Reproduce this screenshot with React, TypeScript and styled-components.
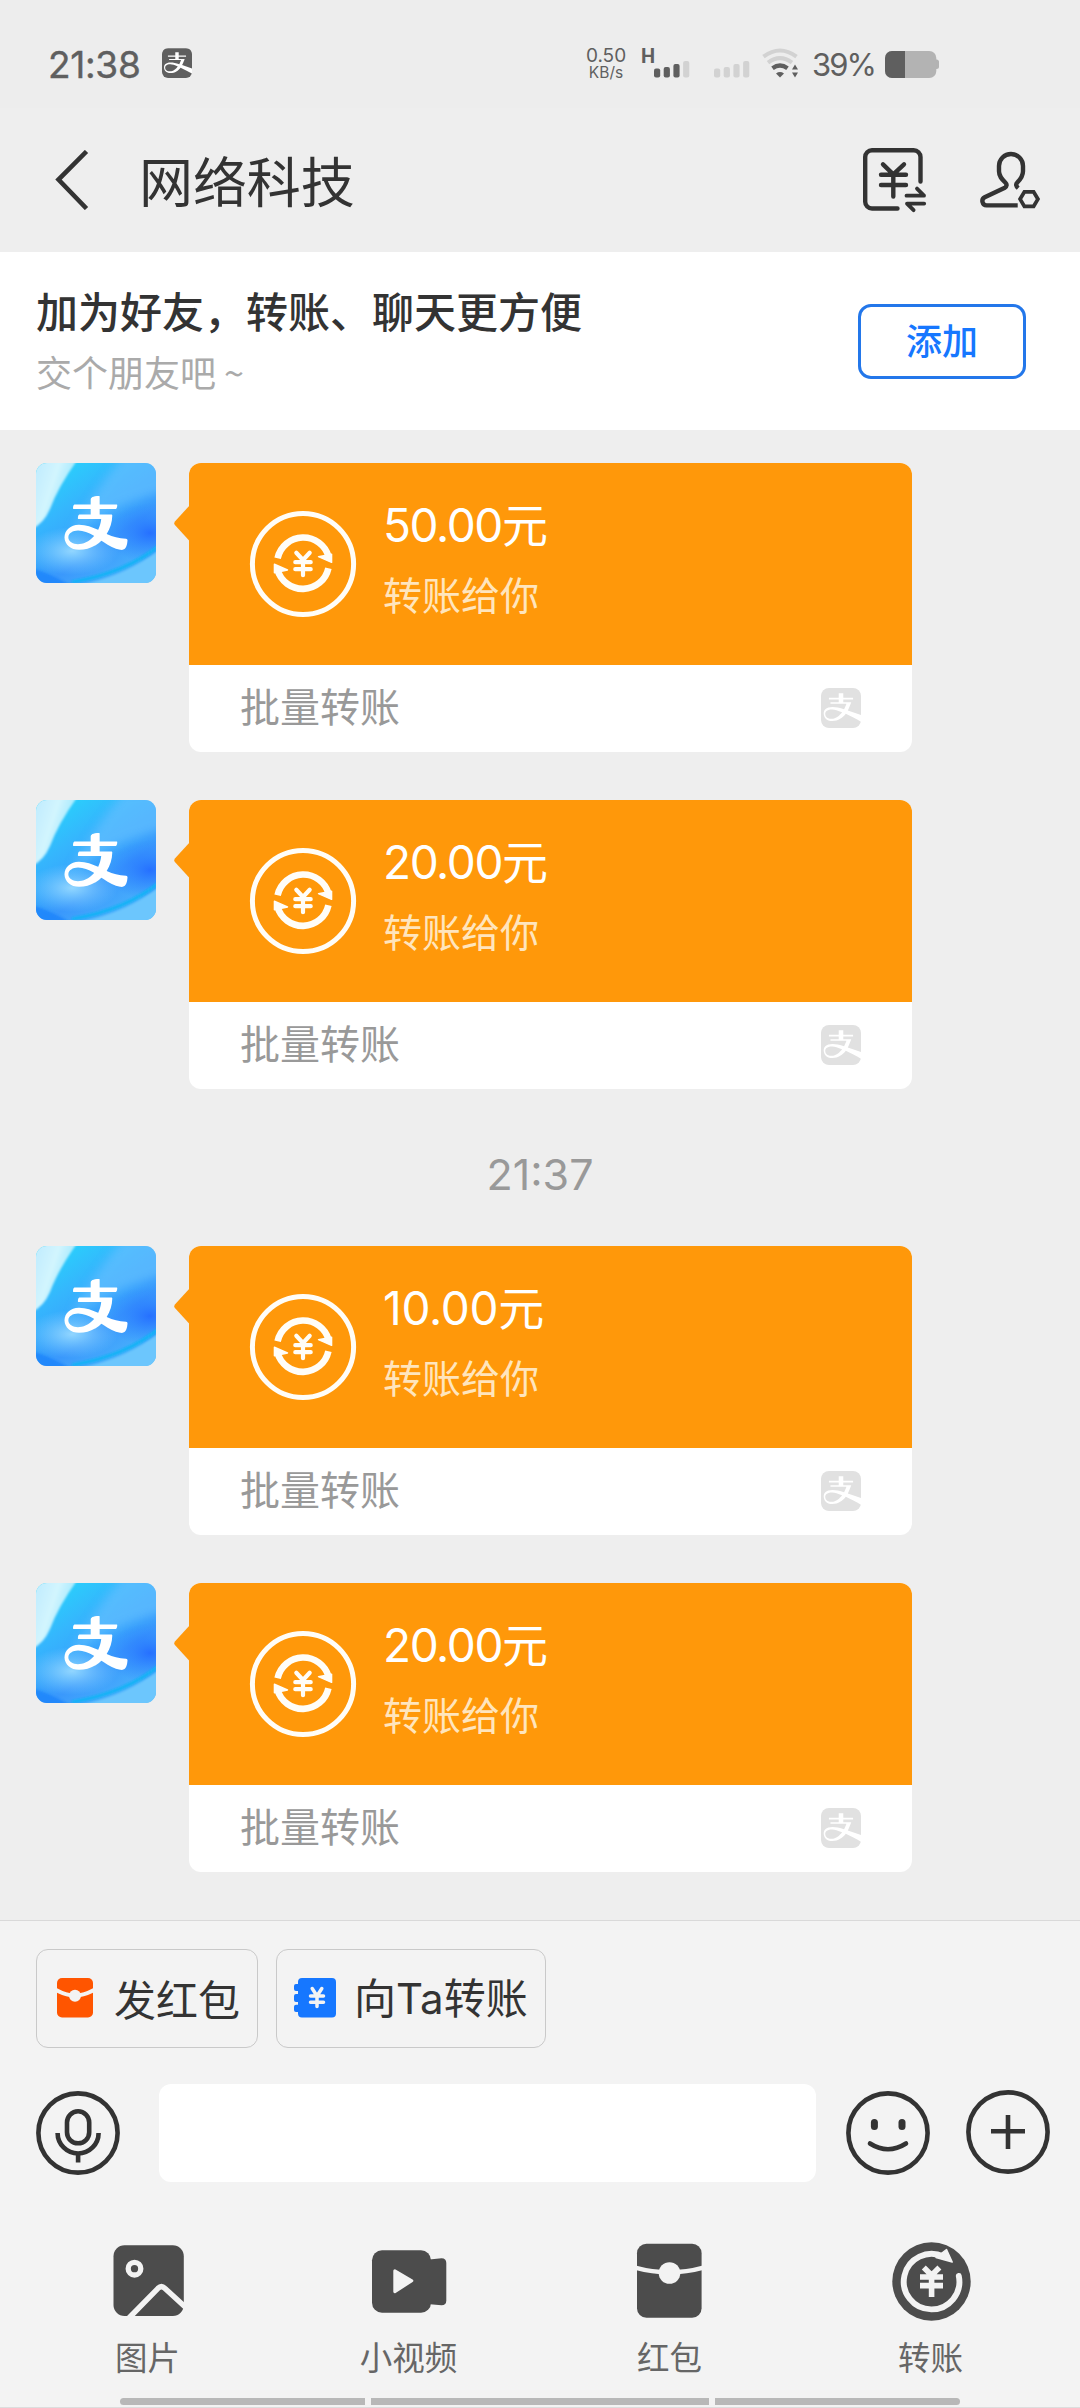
import React from "react";
import styled, { createGlobalStyle } from "styled-components";
import { FaAlipay } from "react-icons/fa";
import { AiOutlineAlipay } from "react-icons/ai";

const cjk = `"Noto Sans CJK SC", "Noto Sans", sans-serif`;
const latin = `Inter, "Noto Sans CJK SC", sans-serif`;

const GlobalStyle = createGlobalStyle`
  * { box-sizing: border-box; }
  body { margin: 0; background: #eeeeee; font-family: ${cjk}; }
  svg { display: block; flex: none; }
`;

const Screen = styled.main`
  display: flex;
  flex-direction: column;
  width: 1080px;
  height: 2408px;
  overflow: hidden;
  background: #eeeeee;
  color: #333333;
`;

/* ---------- status bar ---------- */

const StatusBar = styled.div`
  display: flex;
  align-items: center;
  height: 108px;
  padding: 18px 141px 0 48px;
  background: #ededed;
  color: #5f5f5f;
  font-family: ${latin};
`;

const Clock = styled.span`
  width: 114px;
  font-size: 37px;
  font-weight: 400;
  line-height: 44px;
  letter-spacing: -0.3px;
  padding-top: 4px;
  -webkit-text-stroke: 0.4px #5f5f5f;
`;

const Logo = styled.span<{ $size: number; $radius: number; $bg: string; $color: string }>`
  display: flex;
  align-items: center;
  justify-content: center;
  overflow: hidden;
  flex: none;
  width: ${(p) => p.$size}px;
  height: ${(p) => p.$size}px;
  border-radius: ${(p) => p.$radius}px;
  background: ${(p) => p.$bg};
  color: ${(p) => p.$color};
  svg {
    width: ${(p) => p.$size * 1.004}px;
    height: ${(p) => p.$size * 1.147}px;
  }
`;

const StatusRight = styled.div`
  display: flex;
  align-items: center;
  margin-left: auto;
`;

const Speed = styled.div`
  display: flex;
  flex-direction: column;
  align-items: center;
  width: 38px;
  margin-right: 16px;
  padding-top: 3px;
  font-size: 19px;
  font-weight: 400;
  line-height: 17px;
  white-space: nowrap;
  small {
    font-size: 15.500px;
    line-height: 18px;
  }
`;

const NetType = styled.span`
  align-self: flex-start;
  width: 13px;
  padding-top: 4px;
  font-family: Roboto, sans-serif;
  font-size: 20px;
  font-weight: 700;
  line-height: 17px;
`;

const Percent = styled.span`
  width: 63px;
  margin: 3px 10px 0 14px;
  font-size: 31px;
  line-height: 36px;
  letter-spacing: -1.9px;
  white-space: nowrap;
`;

const BarsIcon = styled.svg`
  margin-right: 24px;
  & + & {
    margin-right: 12px;
  }
`;

const SignalBars = ({ filled }: { filled: number }) => (
  <BarsIcon width="36" height="30" viewBox="0 0 36 30">
    {[9, 10.5, 13.5, 16.5].map((h, i) => (
      <rect
        key={h}
        x={i * 9.7}
        y={29.5 - h}
        width="6.2"
        height={h}
        rx="2"
        fill={i < filled ? "#5f5f5f" : "#d2d2d2"}
      />
    ))}
  </BarsIcon>
);

const WifiIcon = () => (
  <svg width="36" height="30" viewBox="0 0 36 30" fill="none" strokeWidth="4">
    <path d="M1.5 8.6Q18 -3.6 34.5 8.6" stroke="#d2d2d2" />
    <path d="M6 14.6Q18 5.6 30 14.6" stroke="#d2d2d2" />
    <path d="M10.5 20.2Q18 15 25.5 20.2" stroke="#5f5f5f" strokeWidth="4.4" />
    <path d="M14 25.4Q18 22.6 22 25.4L18 29.4Z" fill="#5f5f5f" />
    <path d="M33 16.4l3 5h-6zM33 29.4l3-5h-6z" fill="#5f5f5f" />
  </svg>
);

const Battery = styled.svg`
  margin-top: 3px;
`;

const BatteryIcon = () => (
  <Battery width="54" height="28" viewBox="0 0 54 28">
    <path d="M50 8.5h1.5a2.5 2.5 0 0 1 2.5 2.5v4.500a2.500 2.500 0 0 1-2.500 2.500H50z" fill="#b3b3b3" />
    <rect width="51.300" height="27" rx="7" fill="#b3b3b3" />
    <path d="M7 0H20v27H7a7 7 0 0 1-7-7V7a7 7 0 0 1 7-7z" fill="#5f5f5f" />
  </Battery>
);

/* ---------- title bar ---------- */

const TitleBar = styled.header`
  display: flex;
  align-items: center;
  height: 144px;
  padding: 0 36px 0 54px;
`;

const Title = styled.h1`
  flex: 1;
  margin: 0 0 0 49px;
  font-size: 54px;
  font-weight: 400;
  line-height: 78px;
  letter-spacing: -0.1px;
`;

const TitleActions = styled.div`
  display: flex;
  gap: 48px;
`;

const BackIcon = () => (
  <svg width="36" height="60" viewBox="0 0 36 60" fill="none" stroke="#333" strokeWidth="4.600">
    <path d="M32.500 1.500L4.500 29.600L32.500 58.500" />
  </svg>
);

const TransferRecordIcon = () => (
  <svg
    width="70"
    height="68"
    viewBox="0 0 70 68"
    fill="none"
    stroke="#333"
    strokeWidth="4.400"
    strokeLinecap="round"
    strokeLinejoin="round"
  >
    <path d="M37.500 62.500H12a6.800 6.800 0 0 1-6.800-6.800V11A6.800 6.800 0 0 1 12 4.200h41.700A6.800 6.800 0 0 1 60.500 11v24.500" />
    <path d="M23 18.300l10.300 10 10.700-10M21 28.700h25M21 39h25M33.300 29v21.500" />
    <path d="M46.500 49.700H64L57 42.600M64.200 57.600H47L53.600 64.200" strokeWidth="3.800" />
  </svg>
);

const ContactSettingsIcon = () => (
  <svg width="66" height="68" viewBox="0 0 66 68" fill="none" stroke="#333" strokeWidth="4.400">
    <path d="M39.700 59.400H8.600a4.300 4.300 0 0 1-1.900-8.100L26.800 41.700c2.200-1.200 2.300-3.400.700-5C23.700 33 21 30.200 21 25.200v-5.200a12 12 0 0 1 24 0v5.200c0 5-2.500 8-5.700 11.300-1.700 1.700-1.500 3.500.9 5.600" />
    <path d="M46.400 45.800h9.200l4.300 7.300-4.300 7.300h-9.200l-4.300-7.300z" strokeWidth="3.800" />
  </svg>
);

/* ---------- add friend banner ---------- */

const Banner = styled.section`
  display: flex;
  align-items: center;
  justify-content: space-between;
  height: 178px;
  padding: 0 54px 0 36px;
  background: #ffffff;
`;

const BannerText = styled.div`
  display: flex;
  flex-direction: column;
`;

const BannerTitle = styled.strong`
  margin: -3px 0 3px;
  font-size: 42px;
  font-weight: 500;
  line-height: 60px;
`;

const BannerHint = styled.span`
  font-size: 36px;
  line-height: 56px;
  color: #aaaaaa;
`;

const AddButton = styled.button`
  width: 168px;
  height: 75px;
  padding: 0 0 4px;
  border: 3px solid #2377ea;
  border-radius: 13px;
  background: #ffffff;
  color: #1677ff;
  font: 500 36px/60px ${cjk};
`;

/* ---------- chat ---------- */

const Chat = styled.section`
  display: flex;
  flex-direction: column;
  flex: 1;
  padding: 33px 36px 0;
`;

const Message = styled.article`
  display: flex;
  align-items: flex-start;
  height: 289px;
  margin-bottom: 48px;
`;

const Avatar = styled.div`
  display: grid;
  flex: none;
  width: 120px;
  height: 120px;
  margin-right: 18px;
  border-radius: 11px;
  overflow: hidden;
  > svg {
    grid-area: 1 / 1;
  }
`;

const AvatarMark = styled(AiOutlineAlipay)`
  width: 72px;
  height: 72px;
  place-self: center;
  color: #ffffff;
`;

const Tail = styled.svg`
  margin: 42px -1px 0 0;
`;

const Card = styled.div`
  width: 723px;
  height: 289px;
  border-radius: 12px;
  overflow: hidden;
  background: #ffffff;
`;

const CardTop = styled.div`
  display: flex;
  align-items: flex-start;
  height: 202px;
  padding: 45px 0 0 58px;
  background: #ff980a;
`;

const CardInfo = styled.div`
  display: flex;
  flex-direction: column;
  margin: -13px 0 0 24px;
`;

const Amount = styled.span<{ $tracking: number }>`
  font-family: ${latin};
  font-size: 46px;
  line-height: 60px;
  letter-spacing: ${(p) => p.$tracking}px;
  color: #ffffff;
`;

const Caption = styled.span`
  margin-top: 10px;
  font-size: 39px;
  line-height: 56px;
  color: #ffe5bd;
`;

const CardBottom = styled.div`
  display: flex;
  align-items: center;
  justify-content: space-between;
  height: 87px;
  padding: 0 51px 0 51px;
  font-size: 40px;
  line-height: 56px;
  color: #999999;
`;

const CardLabel = styled.span`
  margin-top: -7px;
`;

const CardBadge = styled(Logo)`
  margin-top: -1px;
`;

const TimeStamp = styled.time`
  height: 109px;
  padding-top: 10px;
  text-align: center;
  font-family: ${latin};
  font-size: 43px;
  line-height: 54px;
  color: #999999;
`;

const AvatarArt = ({ id }: { id: string }) => (
  <svg width="120" height="120" viewBox="0 0 120 120">
    <defs>
      <linearGradient id={`${id}-base`} x1="0.150" y1="0" x2="0.850" y2="1">
        <stop offset="0" stopColor="#27d5fb" />
        <stop offset="0.300" stopColor="#35b6fd" />
        <stop offset="0.650" stopColor="#3a98fc" />
        <stop offset="1" stopColor="#4fb9fb" />
      </linearGradient>
      <linearGradient id={`${id}-pale`} x1="0" y1="0" x2="1" y2="0.500">
        <stop offset="0" stopColor="#bceafe" />
        <stop offset="0.500" stopColor="#d2f5fe" />
        <stop offset="1" stopColor="#8be3fd" />
      </linearGradient>
      <radialGradient id={`${id}-deep`}>
        <stop offset="0" stopColor="#2670ff" />
        <stop offset="1" stopColor="#2c84ff" stopOpacity="0" />
      </radialGradient>
      <radialGradient id={`${id}-soft`}>
        <stop offset="0" stopColor="#92d6ff" />
        <stop offset="1" stopColor="#7accff" stopOpacity="0" />
      </radialGradient>
      <filter id={`${id}-haze`} x="-20%" y="-20%" width="140%" height="140%">
        <feGaussianBlur stdDeviation="5" />
      </filter>
      <filter id={`${id}-edge`} x="-20%" y="-20%" width="140%" height="140%">
        <feGaussianBlur stdDeviation="1.200" />
      </filter>
    </defs>
    <rect width="120" height="120" fill={`url(#${id}-base)`} />
    <path
      d="M88 -8H132V28Q80 40 34 72Q56 30 88 -8Z"
      fill="#6cc2ff"
      opacity="0.600"
      filter={`url(#${id}-haze)`}
    />
    <path
      d="M-4 -4H42Q22 24 14 46Q8 60 -4 66Z"
      fill={`url(#${id}-pale)`}
      filter={`url(#${id}-edge)`}
    />
    <ellipse cx="114" cy="70" rx="44" ry="30" fill={`url(#${id}-deep)`} />
    <ellipse cx="36" cy="88" rx="46" ry="24" fill={`url(#${id}-soft)`} />
    <path
      d="M-10 104Q14 108 46 130H-10Z"
      fill="#1f84fb"
      opacity="0.800"
      filter={`url(#${id}-edge)`}
    />
    <path d="M44 122Q92 112 124 86V124Z" fill="#6cc6fd" filter={`url(#${id}-edge)`} />
    <path
      d="M36 119Q90 110 124 82"
      fill="none"
      stroke="#12b4f5"
      strokeWidth="3"
      filter={`url(#${id}-edge)`}
    />
  </svg>
);

const TransferIcon = () => (
  <svg
    width="112"
    height="112"
    viewBox="-56 -56 112 112"
    fill="none"
    stroke="#fffdf8"
    strokeLinejoin="round"
  >
    <circle r="50.600" strokeWidth="5" />
    <g transform="translate(0 -0.800)">
      <path d="M-25.400 -5A26.300 26.300 0 0 1 25.600 -6.500" strokeWidth="6.600" />
      <path d="M25.400 5A26.300 26.300 0 0 1 -25.600 6.500" strokeWidth="6.600" />
      <path d="M15.500 -6.500L28.600 -9V-0.800Z" fill="#fffdf8" strokeWidth="1.400" />
      <path d="M-15.500 6.800L-28.600 9.500V1Z" fill="#fffdf8" strokeWidth="1.400" />
      <path
        d="M-6.700 -10.400L0 -3.200L6.700 -10.400M-7.700 -1H7.700M-7.700 6H7.700M0 -3V12"
        strokeWidth="4.200"
        strokeLinecap="round"
      />
    </g>
  </svg>
);

const TransferMessage = ({ id, amount }: { id: string; amount: string }) => (
  <Message>
    <Avatar>
      <AvatarArt id={id} />
      <AvatarMark />
    </Avatar>
    <Tail width="16" height="37" viewBox="0 0 16 37">
      <path d="M16 0L0.900 16.500Q-0.300 18.300 0.900 20.100L16 36.500Z" fill="#ff980a" />
    </Tail>
    <Card>
      <CardTop>
        <TransferIcon />
        <CardInfo>
          {/* the digit 1 is narrow, so amounts that open with it need less tightening */}
          <Amount $tracking={amount.startsWith("1") ? -0.3 : -1.4}>{amount}元</Amount>
          <Caption>转账给你</Caption>
        </CardInfo>
      </CardTop>
      <CardBottom>
        <CardLabel>批量转账</CardLabel>
        <CardBadge $size={40} $radius={8} $bg="#ffffff" $color="#e1e1e1">
          <FaAlipay />
        </CardBadge>
      </CardBottom>
    </Card>
  </Message>
);

/* ---------- composer ---------- */

const Composer = styled.footer`
  display: flex;
  flex-direction: column;
  height: 488px;
  padding-top: 28px;
  border-top: 1px solid #d9d9d9;
  background: #f3f3f3;
`;

const Chips = styled.div`
  display: flex;
  gap: 18px;
  padding: 0 36px;
`;

const Chip = styled.button<{ $gap: number; $left: number }>`
  display: flex;
  align-items: center;
  gap: ${(p) => p.$gap}px;
  height: 99px;
  padding: 0 17px 2px ${(p) => p.$left}px;
  border: 1px solid #c9c9c9;
  border-radius: 12px;
  background: transparent;
  color: #333333;
  font: 400 42px/60px ${cjk};
  white-space: nowrap;
`;

const ChipLatin = styled.span`
  font-family: Inter, sans-serif;
`;

const InputRow = styled.div`
  display: flex;
  align-items: center;
  margin-top: 36px;
  padding: 0 30px 0 36px;
`;

const Input = styled.input`
  flex: 1;
  min-width: 0;
  height: 98px;
  margin: 0 30px 0 39px;
  padding: 0 24px;
  border: 0;
  border-radius: 12px;
  background: #ffffff;
  font: 400 42px ${cjk};
`;

const RoundButton = styled.button`
  display: flex;
  width: 84px;
  height: 84px;
  padding: 0;
  border: 0;
  background: none;
  & + & {
    margin: -2px 0 0 36px;
  }
`;

const Tools = styled.nav`
  display: flex;
  justify-content: center;
  gap: 177px;
  margin-top: 57px;
  padding-right: 2px;
`;

const Tool = styled.div`
  display: flex;
  flex-direction: column;
  align-items: center;
  width: 84px;
  font-size: 32.500px;
  line-height: 44px;
  color: #666666;
  white-space: nowrap;
`;

const ToolLabel = styled.span`
  margin-top: 11px;
`;

const HomeIndicator = styled.div`
  display: flex;
  gap: 6px;
  margin-top: auto;
  padding: 0 120px 2px;
  border-bottom: 1px solid #dddddd;
  span {
    height: 7px;
    background: #b8b8b8;
  }
  span:nth-child(1) {
    width: 245px;
    border-radius: 4px 0 0 4px;
  }
  span:nth-child(2) {
    flex: 1;
  }
  span:nth-child(3) {
    width: 245px;
    border-radius: 0 4px 4px 0;
  }
`;

const RedPacketIcon = () => (
  <svg width="36" height="40" viewBox="0 0 36 40">
    <rect width="36" height="39.500" rx="5" fill="#ff5500" />
    <path d="M-1 12Q9 17.500 18 17.500T37 12" fill="none" stroke="#f3f3f3" strokeWidth="4" />
    <circle cx="18" cy="17.700" r="6" fill="#f3f3f3" />
  </svg>
);

const TransferBookIcon = () => (
  <svg width="42" height="40" viewBox="0 0 42 40">
    <path
      d="M8 0H38a4 4 0 0 1 4 4V35.500a4 4 0 0 1-4 4H8a4 4 0 0 1-4-4V34H2a2 2 0 0 1-2-2V28.800a2 2 0 0 1 2-2H4V24H2a2 2 0 0 1-2-2V18a2 2 0 0 1 2-2H4V13H2a2 2 0 0 1-2-2V8a2 2 0 0 1 2-2H4V4A4 4 0 0 1 8 0Z"
      fill="#1677ff"
    />
    <path
      d="M18.200 10.500L23 18L27.800 10.500M16.500 18H29.500M16.500 24.300H29.500M23 18V28.500"
      fill="none"
      stroke="#f3f3f3"
      strokeWidth="3.500"
      strokeLinecap="round"
    />
  </svg>
);

const outline = {
  width: 84,
  height: 84,
  viewBox: "0 0 84 84",
  fill: "none",
  stroke: "#333333",
  strokeWidth: 4.6,
} as const;

const MicIcon = () => (
  <svg {...outline}>
    <circle cx="42" cy="42" r="39.600" />
    <rect x="31" y="20.300" width="22.200" height="32" rx="11.100" />
    <path d="M21.600 42a20.500 20.500 0 0 0 41 0M42.100 62.500V71.500" />
  </svg>
);

const SmileIcon = () => (
  <svg {...outline}>
    <circle cx="42" cy="42" r="39.600" />
    <path d="M24 52.500Q42 64 60 52.500" strokeLinecap="round" />
    <rect x="24.900" y="28" width="7" height="11" rx="3.500" fill="#333" stroke="none" />
    <rect x="52.500" y="28" width="7" height="11" rx="3.500" fill="#333" stroke="none" />
  </svg>
);

const PlusIcon = () => (
  <svg {...outline}>
    <circle cx="42" cy="42" r="39.600" />
    <path d="M25 41.300H59M42 25V59" />
  </svg>
);

const PictureIcon = () => (
  <svg width="84" height="84" viewBox="0 0 84 84" fill="none" stroke="#f3f3f3">
    <rect x="7.500" y="6.300" width="70.300" height="70.700" rx="11" fill="#4c4c4c" stroke="none" />
    <circle cx="28.500" cy="29.700" r="6.300" strokeWidth="5.300" />
    <path d="M20.500 81.500L52 49.300Q55.400 46 58.800 49.300L82 70.500" strokeWidth="5.400" />
  </svg>
);

const VideoIcon = () => (
  <svg width="84" height="84" viewBox="0 0 84 84" fill="#4c4c4c">
    <rect x="5" y="11.300" width="59" height="62.400" rx="10" />
    <path d="M60 20.800L74.500 19.200Q79.300 19.200 79.300 24V61.500Q79.300 66.300 74.500 66.300L60 65Z" />
    <path
      d="M27.800 31.700L44.800 41.800L27.800 52.700Z"
      fill="#f3f3f3"
      stroke="#f3f3f3"
      strokeWidth="3"
      strokeLinejoin="round"
    />
  </svg>
);

const EnvelopeIcon = () => (
  <svg width="84" height="84" viewBox="0 0 84 84">
    <rect x="9" y="4.700" width="64.600" height="74" rx="9.500" fill="#4c4c4c" />
    <path d="M7 28.600Q41.300 38 75.500 28.600" fill="none" stroke="#f3f3f3" strokeWidth="4.600" />
    <circle cx="41.500" cy="34" r="10.800" fill="#f3f3f3" />
  </svg>
);

const TransferToolIcon = () => (
  <svg width="84" height="84" viewBox="0 0 84 84" fill="none" stroke="#f3f3f3">
    <circle cx="42.500" cy="42.500" r="39.200" fill="#4c4c4c" stroke="none" />
    <path
      d="M69.800 37A27.800 27.800 0 1 1 54.500 17.500"
      strokeWidth="5.900"
      strokeLinecap="round"
    />
    <path d="M57.500 10.500L63.200 23L47 18.500Z" fill="#f3f3f3" strokeWidth="1.500" strokeLinejoin="round" />
    <path
      d="M34.800 28.500L42.600 36.300L50.400 28.500M31 38H54M31 46.600H54M42.600 36V58"
      strokeWidth="5.600"
    />
  </svg>
);

const tools = [
  { label: "图片", Icon: PictureIcon },
  { label: "小视频", Icon: VideoIcon },
  { label: "红包", Icon: EnvelopeIcon },
  { label: "转账", Icon: TransferToolIcon },
];

export default function App() {
  return (
    <>
      <GlobalStyle />
      <Screen lang="zh-CN">
        <StatusBar>
          <Clock>21:38</Clock>
          <Logo $size={30} $radius={6} $bg="#ffffff" $color="#5f5f5f">
            <FaAlipay />
          </Logo>
          <StatusRight>
            <Speed>
              0.50
              <small>KB/s</small>
            </Speed>
            <NetType>H</NetType>
            <SignalBars filled={3} />
            <SignalBars filled={0} />
            <WifiIcon />
            <Percent>39%</Percent>
            <BatteryIcon />
          </StatusRight>
        </StatusBar>

        <TitleBar>
          <BackIcon />
          <Title>网络科技</Title>
          <TitleActions>
            <TransferRecordIcon />
            <ContactSettingsIcon />
          </TitleActions>
        </TitleBar>

        <Banner>
          <BannerText>
            <BannerTitle>加为好友，转账、聊天更方便</BannerTitle>
            <BannerHint>交个朋友吧 ~</BannerHint>
          </BannerText>
          <AddButton>添加</AddButton>
        </Banner>

        <Chat>
          <TransferMessage id="m1" amount="50.00" />
          <TransferMessage id="m2" amount="20.00" />
          <TimeStamp>21:37</TimeStamp>
          <TransferMessage id="m3" amount="10.00" />
          <TransferMessage id="m4" amount="20.00" />
        </Chat>

        <Composer>
          <Chips>
            <Chip $gap={21} $left={20}>
              <RedPacketIcon />
              <span>发红包</span>
            </Chip>
            <Chip $gap={18} $left={17}>
              <TransferBookIcon />
              <span>
                向<ChipLatin>Ta</ChipLatin>转账
              </span>
            </Chip>
          </Chips>
          <InputRow>
            <RoundButton aria-label="语音">
              <MicIcon />
            </RoundButton>
            <Input aria-label="消息" />
            <RoundButton aria-label="表情">
              <SmileIcon />
            </RoundButton>
            <RoundButton aria-label="更多">
              <PlusIcon />
            </RoundButton>
          </InputRow>
          <Tools>
            {tools.map(({ label, Icon }) => (
              <Tool key={label}>
                <Icon />
                <ToolLabel>{label}</ToolLabel>
              </Tool>
            ))}
          </Tools>
          <HomeIndicator>
            <span />
            <span />
            <span />
          </HomeIndicator>
        </Composer>
      </Screen>
    </>
  );
}
